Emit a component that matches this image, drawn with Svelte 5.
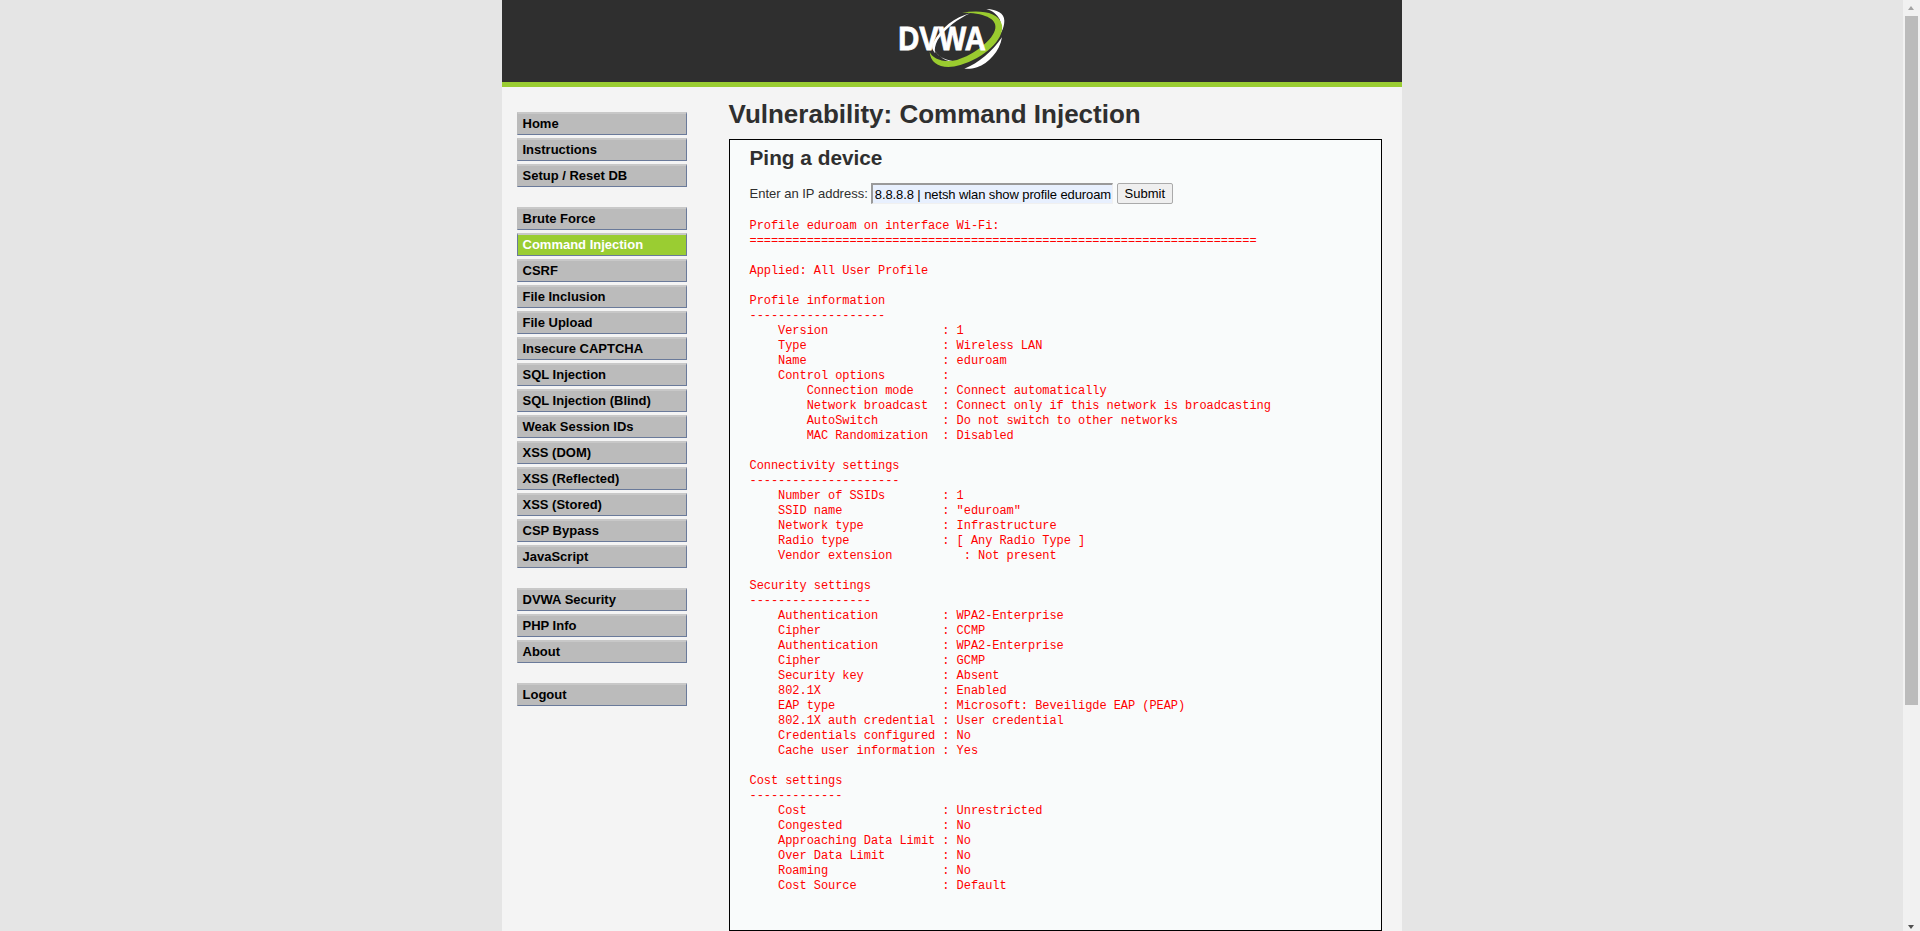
<script>
  const groups = [
    ['Home', 'Instructions', 'Setup / Reset DB'],
    ['Brute Force', 'Command Injection', 'CSRF', 'File Inclusion', 'File Upload', 'Insecure CAPTCHA', 'SQL Injection', 'SQL Injection (Blind)', 'Weak Session IDs', 'XSS (DOM)', 'XSS (Reflected)', 'XSS (Stored)', 'CSP Bypass', 'JavaScript'],
    ['DVWA Security', 'PHP Info', 'About'],
    ['Logout']
  ];
  const output = `Profile eduroam on interface Wi-Fi:
=======================================================================

Applied: All User Profile

Profile information
-------------------
    Version                : 1
    Type                   : Wireless LAN
    Name                   : eduroam
    Control options        :
        Connection mode    : Connect automatically
        Network broadcast  : Connect only if this network is broadcasting
        AutoSwitch         : Do not switch to other networks
        MAC Randomization  : Disabled

Connectivity settings
---------------------
    Number of SSIDs        : 1
    SSID name              : "eduroam"
    Network type           : Infrastructure
    Radio type             : [ Any Radio Type ]
    Vendor extension          : Not present

Security settings
-----------------
    Authentication         : WPA2-Enterprise
    Cipher                 : CCMP
    Authentication         : WPA2-Enterprise
    Cipher                 : GCMP
    Security key           : Absent
    802.1X                 : Enabled
    EAP type               : Microsoft: Beveiligde EAP (PEAP)
    802.1X auth credential : User credential
    Credentials configured : No
    Cache user information : Yes

Cost settings
-------------
    Cost                   : Unrestricted
    Congested              : No
    Approaching Data Limit : No
    Over Data Limit        : No
    Roaming                : No
    Cost Source            : Default
`;
</script>

<div class="page">
  <div class="container">
    <header class="header">
      <svg class="logo" width="200" height="82" viewBox="-25 0 600 246" role="img" aria-label="DVWA">
        <path fill="#fff" d="M378 27C410 28 432 40 432 62C432 85 420 105 405 120C420 95 425 75 418 58C410 42 395 32 378 27Z" />
        <path fill="#fff" d="M312 206C355 190 395 155 425 112C418 155 385 190 350 202C335 207 322 207 312 206Z" />
        <path fill="#fff" d="M330 40C285 50 240 85 218 130C212 145 218 150 224 160C222 150 224 135 232 120C255 85 295 55 330 40Z" />
        <path fill="#fff" d="M215 140C225 165 255 185 300 185C265 190 235 175 215 140Z" />
        <path fill="#9acb2f" d="M305 38C360 30 415 35 425 75C432 120 370 175 300 195C250 210 210 195 208 155C215 175 250 190 290 180C340 165 400 120 405 85C410 55 370 38 305 38Z" />
        <text x="114" y="151" textLength="262" lengthAdjust="spacingAndGlyphs" class="logo-text">DVWA</text>
      </svg>
    </header>
    <div class="columns">
      <nav class="menu">
        {#each groups as group}
          <ul>
            {#each group as item}
              <li class:active={item === 'Command Injection'}>{item}</li>
            {/each}
          </ul>
        {/each}
      </nav>
      <main class="body">
        <h1>Vulnerability: Command Injection</h1>
        <section class="code-area">
          <h2>Ping a device</h2>
          <form class="ping" onsubmit={(e) => e.preventDefault()}>
            <label for="ip">Enter an IP address:</label>
            <input id="ip" type="text" value="8.8.8.8 | netsh wlan show profile eduroam" />
            <button type="submit">Submit</button>
          </form>
          <pre>{output}</pre>
        </section>
      </main>
    </div>
  </div>
</div>

<div class="scrollbar" aria-hidden="true">
  <span class="arrow up"></span>
  <span class="thumb"></span>
  <span class="arrow down"></span>
</div>

<style>
  :global(html), :global(body) {
    margin: 0;
    height: 931px;
    overflow: hidden;
    background: #e5e5e5;
  }

  .page {
    width: 1903px;
    height: 931px;
    overflow: hidden;
  }

  .container {
    width: 900px;
    height: 931px;
    margin: 0 auto;
    background: #f4f4f4;
    color: #2f2f2f;
    font-family: "Liberation Sans", Arial, sans-serif;
    font-size: 13px;
  }

  .header {
    height: 82px;
    background: #2f2f2f;
    border-bottom: 5px solid #9acd32;
    display: flex;
    justify-content: center;
  }

  .logo-text {
    font-family: "Liberation Sans", Arial, sans-serif;
    font-weight: 700;
    font-size: 100px;
    fill: #fff;
    stroke: #fff;
    stroke-width: 2.5px;
  }

  .columns {
    display: flex;
  }

  .menu {
    width: 170px;
    margin: 25px 0 0 15px;
    flex: none;
  }

  .menu ul {
    list-style: none;
    margin: 0 0 20px;
    padding: 0;
    display: flex;
    flex-direction: column;
    gap: 3px;
  }

  .menu li {
    box-sizing: border-box;
    height: 23px;
    line-height: 20px;
    padding-left: 5px;
    background: #bbb;
    border: 1px solid #bbb;
    border-top: 2px solid #c8c8c8;
    border-right-color: #6a7a9a;
    border-bottom: 1px solid #6a7a9a;
    color: #000;
    font-weight: 700;
    font-size: 13px;
  }

  .menu li.active {
    background: #9acd32;
    color: #fff;
    border-left-color: #6a7a9a;
  }

  .body {
    margin-left: 42px;
    width: 653px;
  }

  h1 {
    margin: 11px 0 0;
    font-size: 26px;
    line-height: 32px;
    font-weight: 700;
  }

  .code-area {
    box-sizing: border-box;
    height: 792px;
    margin-top: 9px;
    padding: 0 20px;
    border: 1px solid #000;
    background: #f9fbfb;
  }

  h2 {
    margin: 6px 0 0;
    font-size: 20.8px;
    line-height: 24px;
    font-weight: 700;
  }

  .ping {
    display: flex;
    align-items: center;
    margin-top: 13px;
    height: 21px;
  }

  label {
    margin-right: 3px;
  }

  input {
    box-sizing: border-box;
    width: 242px;
    height: 21px;
    padding: 1px 1px 1px 2px;
    border-style: solid;
    border-width: 2px 1px 1px 2px;
    border-color: #9a9a9a #f0f0f0 #f0f0f0 #9a9a9a;
    background: #e8f0fe;
    color: #000;
    font-family: "Liberation Sans", Arial, sans-serif;
    font-size: 13px;
    letter-spacing: -0.1px;
    outline: none;
  }

  button {
    box-sizing: border-box;
    width: 56px;
    height: 21px;
    margin-left: 4px;
    padding: 0;
    border: 1px solid #aaa;
    border-radius: 2px;
    background: #efefef;
    color: #000;
    font-family: "Liberation Sans", Arial, sans-serif;
    font-size: 13px;
  }

  pre {
    margin: 15px 0 0;
    color: #f00;
    font-family: "Liberation Mono", monospace;
    font-size: 12px;
    letter-spacing: -0.06px;
    line-height: 15px;
  }

  .scrollbar {
    position: fixed;
    top: 0;
    right: 0;
    width: 17px;
    height: 931px;
    background: #f1f1f1;
  }

  .thumb {
    position: absolute;
    left: 2px;
    top: 16px;
    width: 13px;
    height: 689px;
    background: #bbb;
  }

  .arrow {
    position: absolute;
    left: 5px;
    width: 0;
    height: 0;
    border-left: 3.5px solid transparent;
    border-right: 3.5px solid transparent;
  }

  .arrow.up {
    top: 6px;
    border-bottom: 4px solid #a3a3a3;
  }

  .arrow.down {
    top: 925px;
    border-top: 4px solid #505050;
  }
</style>
